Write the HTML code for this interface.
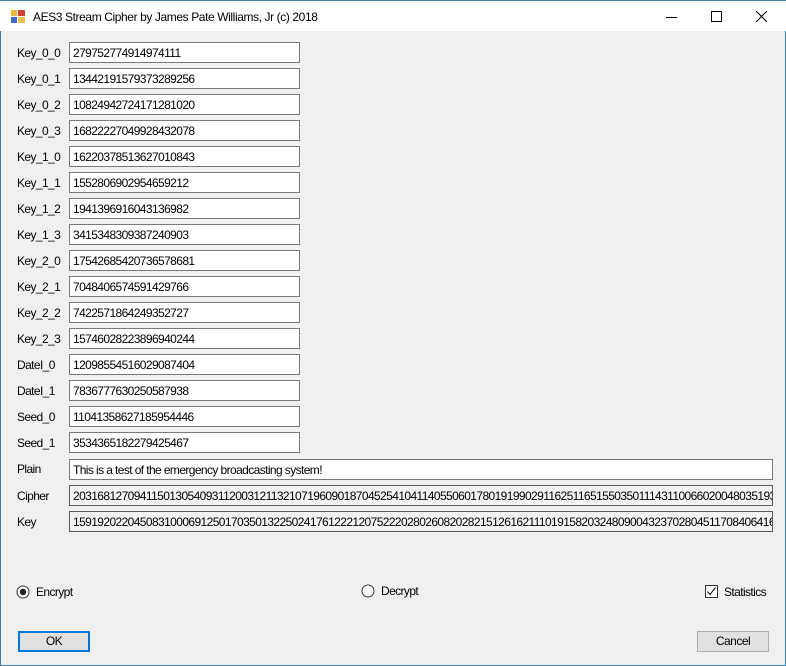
<!DOCTYPE html><html><head><style>
body{margin:0;width:786px;height:666px;overflow:hidden;background:#f0f0f0;font-family:"Liberation Sans",sans-serif;font-size:12px;color:#000;position:relative}
.win{position:absolute;left:0;top:0;width:784px;height:665px;border:1px solid #3c7fb1;border-top:none;}
.tb{position:absolute;left:0;top:0;width:786px;height:31px;background:#fff;border-top:1px solid #3c7fb1;box-sizing:border-box}
.t{position:absolute;left:33px;top:9px;font-size:12px;letter-spacing:-0.4px}
.l{position:absolute;left:17px;letter-spacing:-0.6px}
.b{position:absolute;left:69px;width:231px;height:21px;border:1px solid #7a7a7a;background:#fff;box-sizing:border-box;padding:3px 0 0 3px;white-space:nowrap;overflow:hidden;letter-spacing:-0.6px}
.w{width:704px}
.g{background:#f3f3f3;border-color:#5a5a5a}
.btn{position:absolute;top:631px;width:72px;height:21px;box-sizing:border-box;border:1px solid #adadad;background:#e1e1e1;text-align:center;line-height:19px;font-size:12px;letter-spacing:-0.5px}
</style></head><body>
<div class="win"></div>
<div class="tb">
<svg style="position:absolute;left:11px;top:9px" width="14" height="13"><rect x="0" y="0" width="6" height="6" fill="#e8b83a"/><rect x="7" y="0" width="7" height="6" fill="#d04030"/><rect x="0" y="7" width="6" height="6" fill="#3a70c8"/><rect x="7" y="7" width="7" height="6" fill="#e8c050"/></svg>
<div class="t">AES3 Stream Cipher by James Pate Williams, Jr (c) 2018</div>
<div style="position:absolute;left:666px;top:16px;width:11px;height:1px;background:#000"></div>
<div style="position:absolute;left:711px;top:10px;width:9px;height:9px;border:1px solid #000"></div>
<svg style="position:absolute;left:756px;top:10px" width="11" height="11"><path d="M0 0L11 11M11 0L0 11" stroke="#000"/></svg>
</div>
<div class="l" style="top:46px">Key_0_0</div><div class="b" style="top:42px">279752774914974111</div>
<div class="l" style="top:72px">Key_0_1</div><div class="b" style="top:68px">13442191579373289256</div>
<div class="l" style="top:98px">Key_0_2</div><div class="b" style="top:94px">10824942724171281020</div>
<div class="l" style="top:124px">Key_0_3</div><div class="b" style="top:120px">16822227049928432078</div>
<div class="l" style="top:150px">Key_1_0</div><div class="b" style="top:146px">16220378513627010843</div>
<div class="l" style="top:176px">Key_1_1</div><div class="b" style="top:172px">1552806902954659212</div>
<div class="l" style="top:202px">Key_1_2</div><div class="b" style="top:198px">1941396916043136982</div>
<div class="l" style="top:228px">Key_1_3</div><div class="b" style="top:224px">3415348309387240903</div>
<div class="l" style="top:254px">Key_2_0</div><div class="b" style="top:250px">17542685420736578681</div>
<div class="l" style="top:280px">Key_2_1</div><div class="b" style="top:276px">7048406574591429766</div>
<div class="l" style="top:306px">Key_2_2</div><div class="b" style="top:302px">7422571864249352727</div>
<div class="l" style="top:332px">Key_2_3</div><div class="b" style="top:328px">15746028223896940244</div>
<div class="l" style="top:358px">DateI_0</div><div class="b" style="top:354px">12098554516029087404</div>
<div class="l" style="top:384px">DateI_1</div><div class="b" style="top:380px">7836777630250587938</div>
<div class="l" style="top:410px">Seed_0</div><div class="b" style="top:406px">11041358627185954446</div>
<div class="l" style="top:436px">Seed_1</div><div class="b" style="top:432px">3534365182279425467</div>
<div class="l" style="top:462px">Plain</div><div class="b w" style="top:459px">This is a test of the emergency broadcasting system!</div>
<div class="l" style="top:489px">Cipher</div><div class="b w g" style="top:485px">203168127094115013054093112003121132107196090187045254104114055060178019199029116251165155035011143110066020048035193</div>
<div class="l" style="top:515px">Key</div><div class="b w g" style="top:511px">159192022045083100069125017035013225024176122212075222028026082028215126162111019158203248090043237028045117084064167</div>
<svg style="position:absolute;left:16px;top:585px" width="14" height="14"><circle cx="7" cy="7" r="6" fill="#fff" stroke="#333"/><circle cx="7" cy="7" r="3.2" fill="#222"/></svg>
<div style="position:absolute;left:36px;top:585px;letter-spacing:-0.6px">Encrypt</div>
<svg style="position:absolute;left:361px;top:584px" width="14" height="14"><circle cx="7" cy="7" r="6" fill="#fff" stroke="#333"/></svg>
<div style="position:absolute;left:381px;top:584px;letter-spacing:-0.6px">Decrypt</div>
<svg style="position:absolute;left:705px;top:585px" width="13" height="13"><rect x="0.5" y="0.5" width="12" height="12" fill="#fff" stroke="#333"/><path d="M2.5 6.5L5 9.5L10.5 2.5" stroke="#222" fill="none" stroke-width="1.2"/></svg>
<div style="position:absolute;left:724px;top:585px;letter-spacing:-0.6px">Statistics</div>
<div class="btn" style="left:18px;border:2px solid #0078d7;line-height:17px">OK</div>
<div class="btn" style="left:697px">Cancel</div>
</body></html>
